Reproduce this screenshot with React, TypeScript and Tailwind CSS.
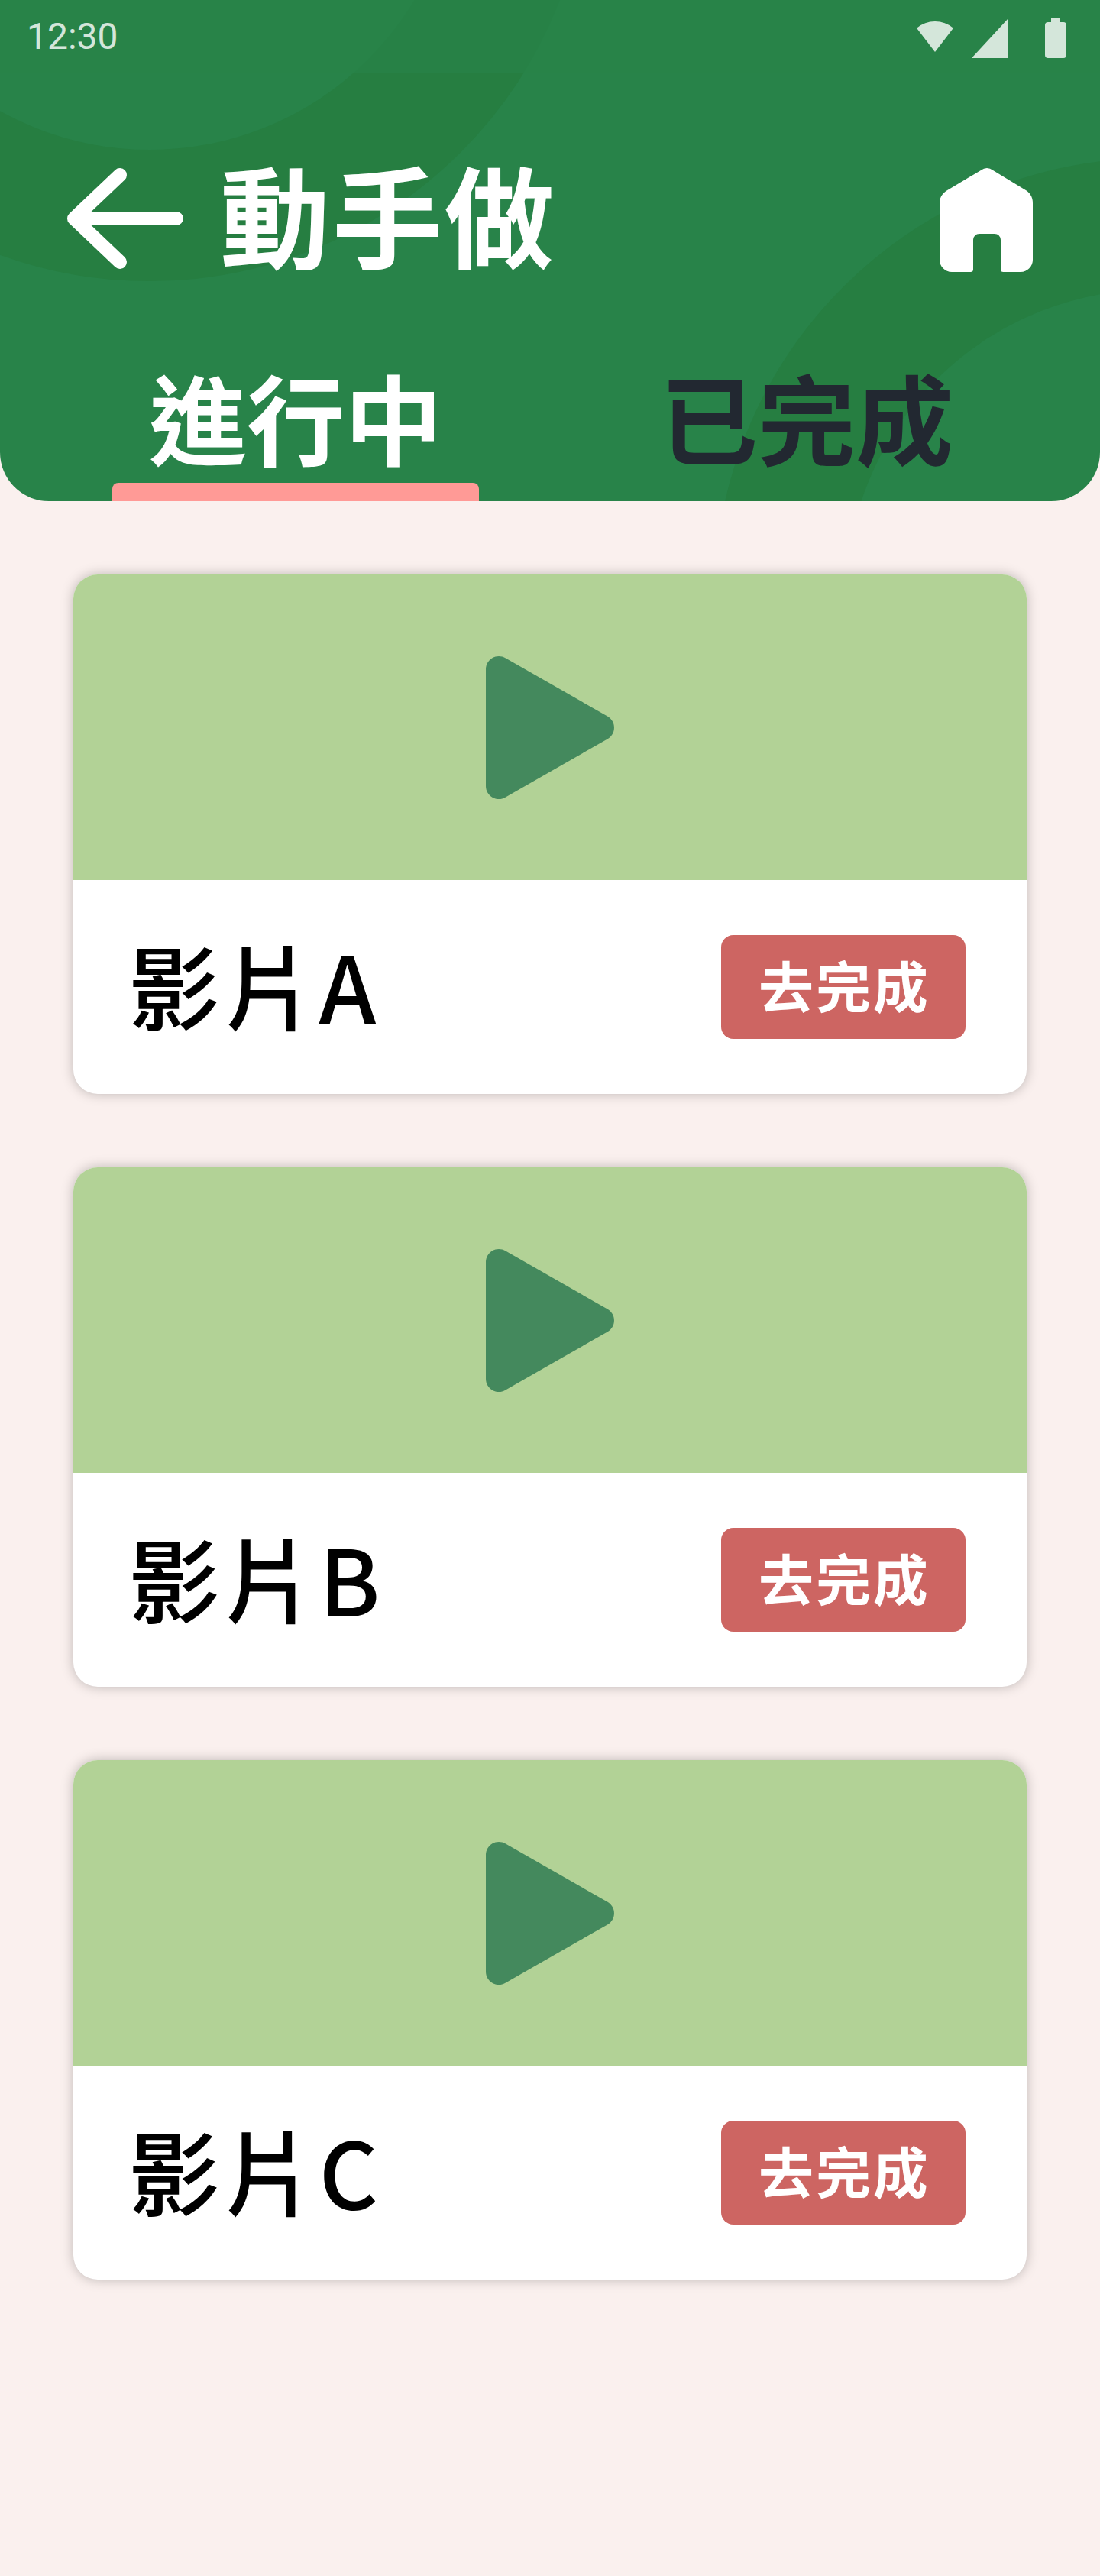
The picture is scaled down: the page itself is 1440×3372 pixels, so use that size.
const videos = ["影片A", "影片B", "影片C"];

function HeaderRings() {
  return (
    <svg className="absolute inset-0 h-full w-full" viewBox="0 0 1440 656" fill="none" aria-hidden="true">
      <circle cx="196" cy="-208" r="490" stroke="#267E41" strokeWidth="172" />
      <circle cx="1511" cy="783" r="490" stroke="#267E41" strokeWidth="172" />
    </svg>
  );
}

function StatusBar() {
  return (
    <div className="relative flex h-24 items-center justify-between bg-[#288349]/70 pl-[35px]">
      <span className="font-[Roboto,sans-serif] text-5xl leading-none text-white/80">12:30</span>
      <svg className="mt-1 h-[52px] w-60 text-white/80" viewBox="0 0 240 52" fill="currentColor" aria-hidden="true">
        <path d="M24 44 0 12.700A37.500 37.500 0 0 1 48 12.700Z" />
        <path d="M72 52H120V0Z" />
        <path d="M176 0h12v5h4a4 4 0 0 1 4 4v39a4 4 0 0 1-4 4h-20a4 4 0 0 1-4-4V9a4 4 0 0 1 4-4h4Z" />
      </svg>
    </div>
  );
}

function TitleBar() {
  return (
    <div className="relative mt-[118px] flex h-36 items-center px-[88px]">
      <svg className="h-[134px] w-[152px]" viewBox="0 0 152 134" fill="none" stroke="#fff" strokeWidth="18" strokeLinecap="round" strokeLinejoin="round" aria-hidden="true">
        <path d="M69 10 9 67l60 57M9 67h134" />
      </svg>
      <h1 className="ml-12 pb-4 text-[144px] font-bold leading-none tracking-[0.02em] text-white">動手做</h1>
      <svg className="ml-auto mt-1 h-[136px] w-[122px]" viewBox="0 0 122 136" fill="#fff" aria-hidden="true">
        <path d="M54 3Q62-3 70 3L114.500 30Q122 36 122 46V120A16 16 0 0 1 106 136H83.500Q80 136 80 132.500V94a8 8 0 0 0-8-8H52a8 8 0 0 0-8 8V132.500Q44 136 40.500 136H16A16 16 0 0 1 0 120V46Q0 36 8.500 30Z" />
      </svg>
    </div>
  );
}

function Tabs() {
  return (
    <div className="relative mt-auto flex gap-[189px] pl-[147px] text-[128px] font-bold leading-none">
      <div className="flex w-[480px] flex-col items-center">
        <span className="pb-[23px] text-white">進行中</span>
        <span className="h-6 w-full rounded-t-lg bg-[#FF9A96]" />
      </div>
      <div className="flex w-[480px] flex-col items-center">
        <span className="text-[#222831]">已完成</span>
      </div>
    </div>
  );
}

function VideoCard({ title }: { title: string }) {
  return (
    <article className="overflow-hidden rounded-[32px] bg-white shadow-[0_0_16px_rgba(0,0,0,0.25)]">
      <div className="flex h-[400px] items-center justify-center bg-[#B2D296]">
        <svg className="h-[187px] w-[168px]" viewBox="0 0 168 187" fill="#44895D" aria-hidden="true">
          <path d="M0 17A17 17 0 0 1 25.500 2.300L159.500 78.800A17 17 0 0 1 159.500 108.200L25.500 184.700A17 17 0 0 1 0 170Z" />
        </svg>
      </div>
      <div className="flex h-[280px] items-center justify-between pl-[72px] pr-20">
        <h2 className="pb-2 text-[120px] font-medium leading-none tracking-[0.04em] text-black">{title}</h2>
        <button className="h-[136px] w-80 rounded-2xl bg-[#CD6562] pb-2 pl-[49px] text-left text-7xl font-bold leading-none tracking-[0.04em] text-white">
          去完成
        </button>
      </div>
    </article>
  );
}

export default function App() {
  return (
    <div className="h-[3372px] w-[1440px] overflow-hidden bg-[#FAF0EE] font-['Noto_Sans_CJK_TC',sans-serif]">
      <header className="relative flex h-[656px] flex-col overflow-hidden rounded-b-[64px] bg-[#288349]">
        <HeaderRings />
        <StatusBar />
        <TitleBar />
        <Tabs />
      </header>
      <main className="flex flex-col gap-24 px-24 pt-24">
        {videos.map((title) => (
          <VideoCard key={title} title={title} />
        ))}
      </main>
    </div>
  );
}
